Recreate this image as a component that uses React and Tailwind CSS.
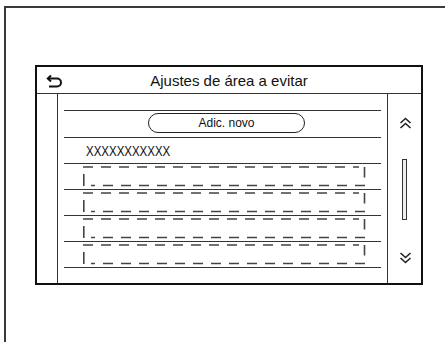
import React from "react";

function BackIcon() {
  return (
    <svg width="18" height="16" viewBox="0 0 18 16" fill="none">
      <path d="M5 1.5 L1.8 4.5 L5 7.5" stroke="#111" strokeWidth="2" strokeLinejoin="miter" />
      <path d="M2 4.5 H11 A4 4 0 0 1 11 12.5 H3" stroke="#111" strokeWidth="2" />
    </svg>
  );
}

function ChevUp() {
  return (
    <svg width="13" height="12" viewBox="0 0 13 12" fill="none">
      <polyline points="1.5,6 6.5,1.5 11.5,6" stroke="#222" strokeWidth="1.6" />
      <polyline points="1.5,11 6.5,6.5 11.5,11" stroke="#222" strokeWidth="1.6" />
    </svg>
  );
}

function ChevDown() {
  return (
    <svg width="13" height="12" viewBox="0 0 13 12" fill="none">
      <polyline points="1.5,1 6.5,5.5 11.5,1" stroke="#222" strokeWidth="1.6" />
      <polyline points="1.5,6 6.5,10.5 11.5,6" stroke="#222" strokeWidth="1.6" />
    </svg>
  );
}

function DashedBox() {
  return (
    <svg width="283" height="21" viewBox="0 0 283 21" fill="none">
      <path d="M0 1 H276" stroke="#444" strokeWidth="1.6" strokeDasharray="10 8" />
      <path d="M281.5 1 V11.5" stroke="#444" strokeWidth="1.6" />
      <path d="M282 19.5 H8" stroke="#444" strokeWidth="1.6" strokeDasharray="10 8" />
      <path d="M0.8 8 V20" stroke="#444" strokeWidth="1.6" />
    </svg>
  );
}

export default function App() {
  const rows = [0, 1, 2, 3];
  return (
    <div className="w-[445px] h-[342px] bg-white overflow-hidden font-['Liberation_Sans',Arial,sans-serif] text-[#111]">
      <div className="ml-[4px] mt-[6px] h-[400px] border-l-2 border-t-2 border-[#3a3a3a] pl-[29px] pt-[57px]">
        <div className="w-[388px] h-[220px] border-2 border-[#111] flex flex-col">
          <div className="relative h-[27px] border-b border-[#333] flex items-center justify-center">
            <div className="absolute left-[9px] top-[7px]">
              <BackIcon />
            </div>
            <span className="text-[15px] leading-none pt-[1px]">Ajustes de área a evitar</span>
          </div>
          <div className="flex flex-1">
            <div className="w-[21px] border-r border-[#333]" />
            <div className="w-[329px] px-[6px] pt-[16px]">
              <div className="border-t border-[#333] h-[27px] pt-[2px]">
                <div className="ml-[84px] w-[157px] h-[20px] rounded-full border-[1.5px] border-[#222] flex items-center justify-center text-[12px] leading-none">
                  Adic. novo
                </div>
              </div>
              <div className="border-t border-[#333] h-[26px] flex items-center pl-[22px]">
                <span className="inline-block text-[14px] leading-none origin-left scale-x-[0.82]">XXXXXXXXXXX</span>
              </div>
              {rows.map((r) => (
                <div key={r} className="border-t border-[#333] h-[26px] pt-[2px] pl-[19px]">
                  <DashedBox />
                </div>
              ))}
              <div className="border-t border-[#333]" />
            </div>
            <div className="flex-1 border-l border-[#333] flex flex-col items-center">
              <div className="mt-[23px] ml-[1px]">
                <ChevUp />
              </div>
              <div className="mt-[30px] w-[5px] h-[61px] border border-[#333] bg-[#eee]" />
              <div className="mt-[32px] ml-[1px]">
                <ChevDown />
              </div>
            </div>
          </div>
        </div>
      </div>
    </div>
  );
}
